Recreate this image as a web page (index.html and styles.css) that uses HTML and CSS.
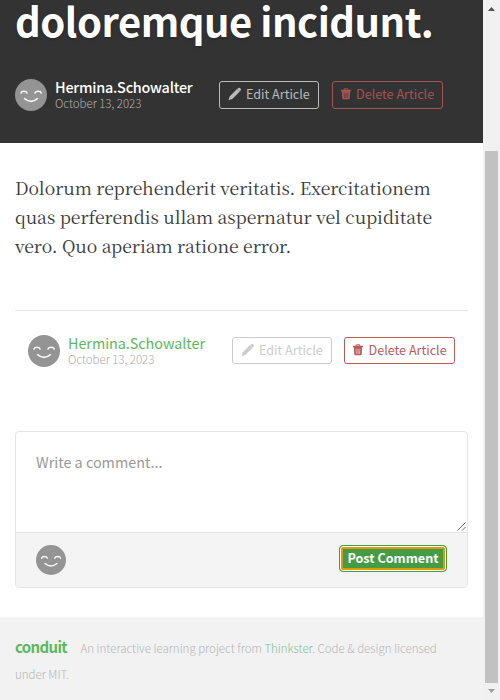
FILE: index.html
```html
<!DOCTYPE html>
<html lang="en">
<head>
<meta charset="utf-8">
<title>Conduit</title>
<link rel="stylesheet" href="styles.css">
</head>
<body>
<svg class="defs" width="0" height="0">
  <symbol id="face" viewBox="0 0 32 32"><circle cx="16" cy="16" r="16" fill="#949494"/><path d="M6 14C6.8 11.8 11 11.6 12 14M20 14C21 11.6 25.6 11.8 26.2 14M9.6 19.7Q16 25.2 22.4 19.7" fill="none" stroke="#f7f7f7" stroke-width="1.6" stroke-linecap="round"/></symbol>
  <symbol id="pencil" viewBox="0 0 14 14"><path d="M.5 13.2 1.6 9.4 9 2.1 11.6 4.7 4.3 12ZM9.2 1.9 10.4.9Q11.2.4 11.9 1L12.7 1.8Q13.3 2.6 12.7 3.4L11.7 4.6Z" fill="currentColor"/></symbol>
  <symbol id="trash" viewBox="0 0 10 12"><path d="M3.2 2V.8H6.8V2" fill="none" stroke="currentColor"/><path fill-rule="evenodd" d="M0 1.7H10V3.2H0ZM.8 3.2H9.2L8.7 10.5Q8.6 11.3 7.6 11.3H2.4Q1.4 11.3 1.3 10.5ZM2.8 4.8 3 10H3.5L3.3 4.8ZM4.7 4.8V10H5.3V4.8ZM6.7 4.8 6.5 10H7L7.2 4.8Z" fill="currentColor"/></symbol>
</svg>
<div class="window">
  <main class="page">
    <header class="banner">
      <h1>doloremque incidunt.</h1>
      <div class="meta">
        <svg class="avatar"><use href="#face"/></svg>
        <div class="info"><a class="name">Hermina.Schowalter</a><span class="date">October 13, 2023</span></div>
        <button class="btn edit"><svg class="pencil"><use href="#pencil"/></svg><span>Edit Article</span></button>
        <button class="btn delete"><svg class="trash"><use href="#trash"/></svg><span>Delete Article</span></button>
      </div>
    </header>
    <article class="content">
      <p><span>Dolorum reprehenderit veritatis. Exercitationem</span> <span>quas perferendis ullam aspernatur vel cupiditate</span> <span>vero. Quo aperiam ratione error.</span></p>
    </article>
    <div class="meta actions">
      <svg class="avatar"><use href="#face"/></svg>
      <div class="info"><a class="name">Hermina.Schowalter</a><span class="date">October 13, 2023</span></div>
      <button class="btn edit"><svg class="pencil"><use href="#pencil"/></svg><span>Edit Article</span></button>
      <button class="btn delete"><svg class="trash"><use href="#trash"/></svg><span>Delete Article</span></button>
    </div>
    <form class="card">
      <div class="field"><span>Write a comment...</span><svg class="grip" viewBox="0 0 9 9"><path d="M.5 8.5l8-8M5 8.5 8.5 5" stroke="#555" fill="none" stroke-width=".9"/></svg></div>
      <div class="card-footer"><svg class="avatar small"><use href="#face"/></svg><button type="button" class="post"><span>Post Comment</span></button></div>
    </form>
    <footer class="footer"><a class="logo">conduit</a><span class="legal">An interactive learning project from <a>Thinkster</a>. Code &amp; design licensed</span><span class="legal second">under MIT.</span></footer>
  </main>
  <div class="scrollbar"><svg class="arrow" viewBox="0 0 7 4"><path d="M0 4 3.5 0 7 4Z" fill="#505050"/></svg><div class="thumb"></div><svg class="arrow" viewBox="0 0 7 4"><path d="M0 0 3.5 4 7 0Z" fill="#a0a0a0"/></svg></div>
</div>
</body>
</html>
```
FILE: styles.css
```css
* { box-sizing: border-box; }
body { margin: 0; font-family: "Noto Sans CJK SC", sans-serif; background: #fff; overflow: hidden; }
.defs { position: absolute; }
.window { display: flex; width: 500px; height: 700px; overflow: hidden; }
.page { display: flow-root; width: 483px; height: 700px; overflow: hidden; }
.banner { display: flow-root; height: 143px; padding: 0 15px; background: #333; }
h1 { margin: -4px 0 0; font-size: 40px; line-height: 49px; font-weight: 700; color: #fff; white-space: nowrap; letter-spacing: -0.5px; text-shadow: 0 1px 3px rgba(0,0,0,.3); }
.meta { display: flex; align-items: flex-start; }
.banner .meta { margin-top: 34px; }
.avatar { width: 32px; height: 32px; flex: none; }
.info { display: flex; flex-direction: column; flex: none; width: 172px; padding-left: 8px; white-space: nowrap; }
.name { font-size: 14.4px; line-height: 16px; color: #fff; font-weight: 500; letter-spacing: -.23px; }
.date { font-size: 11.5px; line-height: 16px; color: #b3b3b3; font-weight: 300; letter-spacing: -.03px; }
.btn { display: flex; align-items: center; flex: none; width: 100px; height: 28px; margin: 2px 0 0; padding: 0 0 2px 8px; border: 1px solid #bbb; border-radius: 3px; background: none; color: #bbb; font: 12.6px/24px "Noto Sans CJK SC", sans-serif; white-space: nowrap; }
.btn.delete { width: 111px; margin-left: 13px; border-color: #a65355; color: #a65355; }
.pencil { width: 14px; height: 14px; margin-right: 4px; flex: none; }
.trash { width: 10px; height: 12px; margin-right: 5px; flex: none; }
.content { height: 168px; margin: 0 15px; padding-top: 30px; border-bottom: 1px solid #e3e3e3; }
p { margin: 0; font: 17.6px/29px "Noto Serif CJK SC", "Liberation Serif", serif; letter-spacing: -.03px; color: #373a3c; }
p span { display: block; white-space: nowrap; }
.actions { height: 120px; padding: 24px 0 0 28px; }
.actions .name { color: #5cb85c; font-weight: 400; letter-spacing: -.05px; }
.actions .date { color: #aaa; }
.actions .btn { height: 27px; color: #ccc; border-color: #ccc; }
.actions .btn.delete { margin-left: 12px; color: #b85c5c; border-color: #b85c5c; }
.actions .trash { margin-right: 5.5px; }
.card { width: 453px; height: 157px; margin: 0 15px; border: 1px solid #e5e5e5; border-radius: 4px; overflow: hidden; }
.field { position: relative; height: 100px; padding: 18px 20px; font-size: 14.4px; line-height: 24px; color: #999; }
.grip { position: absolute; right: 1px; bottom: 1px; width: 9px; height: 9px; }
.card-footer { display: flex; justify-content: space-between; height: 56px; padding: 12px 20px; border-top: 1px solid #e5e5e5; background: #f4f4f4; }
.avatar.small { width: 30px; height: 30px; }
.post { width: 108px; height: 27px; padding: 0 0 2px; border: 1px solid #449d44; border-radius: 4px; background: #449d44; box-shadow: inset 0 0 0 1px #fff, inset 0 0 0 3px #e59700; color: #fff; font: bold 12.6px/23px "Noto Sans CJK SC", sans-serif; white-space: nowrap; }
.footer { height: 83px; margin-top: 29px; padding: 16px 15px; background: #f2f2f2; line-height: 26px; white-space: nowrap; }
.logo { display: inline-block; width: 65.5px; font: bold 15px/26px "Noto Sans CJK SC", sans-serif; letter-spacing: -.65px; color: #5cb85c; }
.legal { font-size: 11.5px; font-weight: 300; letter-spacing: -.01px; color: #b5b5b5; }
.legal a { color: #84bf91; }
.second { display: block; }
.scrollbar { display: flex; flex-direction: column; align-items: center; width: 17px; height: 700px; background: #f1f1f1; }
.arrow { width: 7px; height: 4px; margin-top: 7px; }
.thumb { width: 13px; height: 532px; margin-top: 140px; background: #c1c1c1; }
.thumb + .arrow { margin-top: 6px; }
```
